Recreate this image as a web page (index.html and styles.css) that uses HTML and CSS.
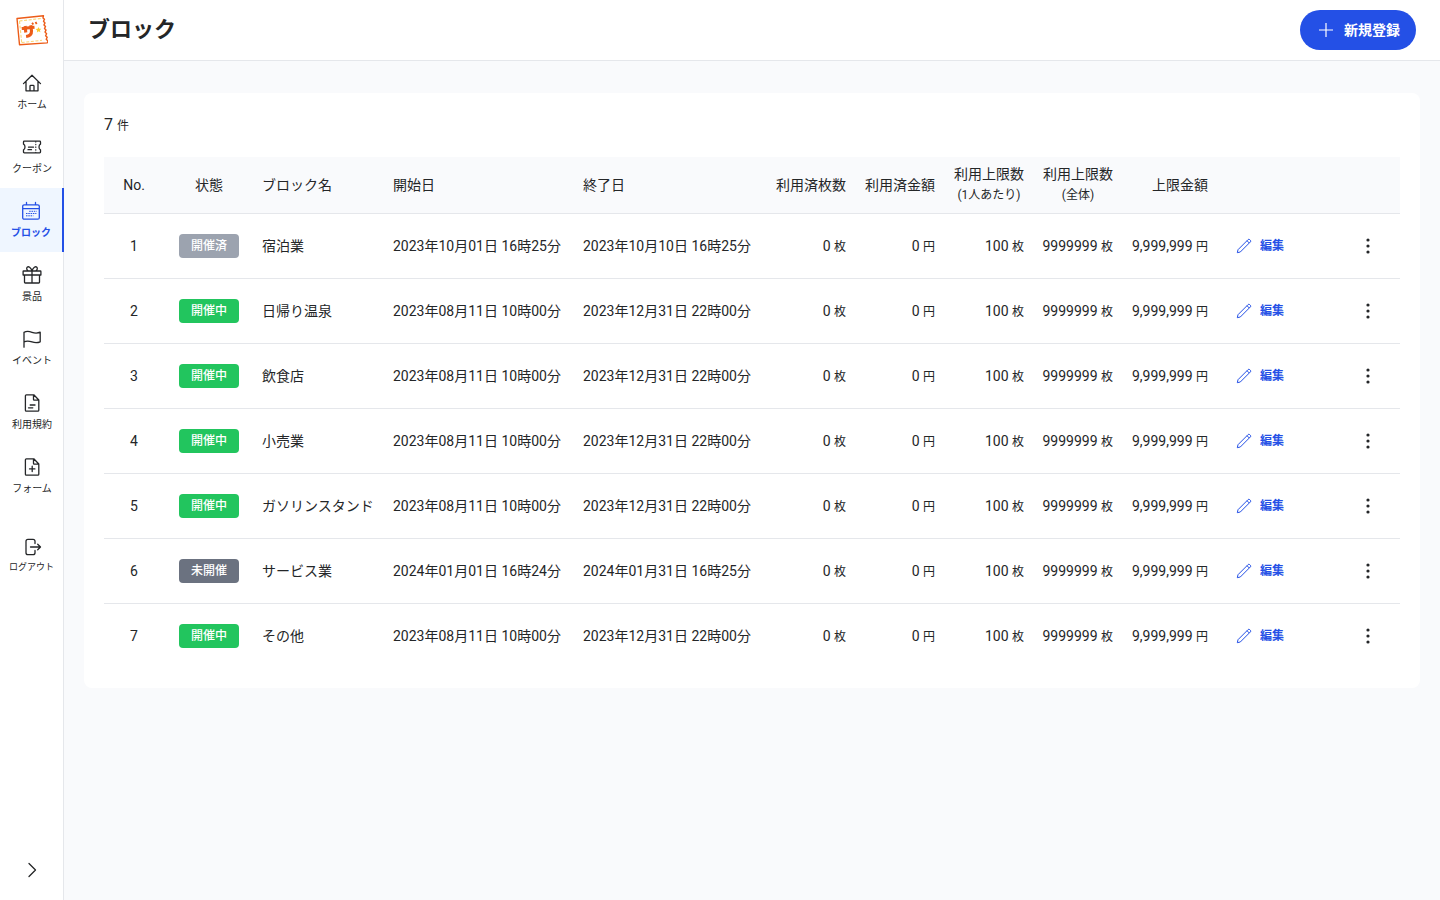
FILE: index.html
```html
<!DOCTYPE html>
<html lang="ja">
<head>
<meta charset="utf-8">
<meta name="viewport" content="width=device-width, initial-scale=1">
<title>ブロック</title>
<link rel="stylesheet" href="styles.css">
</head>
<body>
<svg class="sprite" aria-hidden="true">
  <symbol id="pencil" viewBox="0 0 16 16"><path d="M1.300 14.700l.7-3L12.100 1.600a1.100 1.100 0 0 1 1.600 0l.7.700a1.100 1.100 0 0 1 0 1.600L4.300 14zM11 2.700l2.300 2.300"/></symbol>
  <symbol id="dots" viewBox="0 0 20 20"><circle cx="10" cy="4" r="1.600"/><circle cx="10" cy="10" r="1.600"/><circle cx="10" cy="16" r="1.600"/></symbol>
</svg>
<div class="app">
  <aside class="sidebar">
    <a class="logo" href="#" aria-label="トップ">
      <svg width="32" height="32" viewBox="0.5 -0.5 32 32" fill="none">
        <path d="M1.500 4L28 1.200l-.5 2.300 1.500 1.300-1 2 1.500 1.600-1 2 1.500 1.600-1 2 1.500 1.600-1 2 1.600 1.600-1 2 1.600 1.600-1 2 1.700 1.600-.6 2L4 30.300z" stroke="#ec5c18" stroke-width="1.400" stroke-linejoin="round"/>
        <path d="M4 6.500L25.500 4M4 6.500L6.200 28M6.200 28L26.500 25.800" stroke="#fbd676" stroke-width="1.100" stroke-dasharray="3 1.600"/>
        <path d="M6.200 14l12.800-1.300M9.600 11.500l.7 6.500M15.300 10.800l.7 5.600c.2 3.200-1.400 5-5.400 5.600" stroke="#ec5c18" stroke-width="3.100"/>
        <path d="M16.600 8.200l1.200 1.800M20 7.600l1.200 1.800" stroke="#ec5c18" stroke-width="1.800"/>
        <path d="M23 12.500l.8 1.700 2 .1-1.400 1.400.5 2-1.800-.9-1.700 1.100.3-2-1.500-1.300 2-.4z" fill="#fbc92e"/>
      </svg>
    </a>
    <nav class="nav" aria-label="メイン">
      <a class="nav-item" href="#">
        <svg class="icon" viewBox="0 0 20 20"><path d="M1.500 10.600L10 2.200l8.500 8.400M4 8.300v9.500h12V8.300M8 17.800v-4.600c0-.5.3-.8.8-.8h2.400c.5 0 .8.3.8.8v4.600"/></svg>
        <span>ホーム</span>
      </a>
      <a class="nav-item" href="#">
        <svg class="icon" viewBox="0 0 20 20"><path d="M2.300 4.200h15.400c.5 0 .8.3.8.8v2.200c-2 .8-2 4.800 0 5.600V15c0 .5-.3.8-.8.8H2.300c-.5 0-.8-.3-.8-.8v-2.200c2-.8 2-4.800 0-5.600V5c0-.5.3-.8.8-.8zM6.500 10.200h5M6 12.700h3.500"/><path d="M13.800 4.500v11" stroke-width="1.100" stroke-dasharray=".6 2.100"/></svg>
        <span>クーポン</span>
      </a>
      <a class="nav-item active" href="#" aria-current="page">
        <svg class="icon" viewBox="0 0 20 20"><path d="M3.200 3.800h13.600c.9 0 1.500.6 1.500 1.500v11.400c0 .9-.6 1.500-1.500 1.500H3.200c-.9 0-1.500-.6-1.500-1.500V5.300c0-.9.6-1.500 1.500-1.500zM1.700 7.700h16.600M5.500 1.500v2.300M14.500 1.500v2.300"/><path class="dashes" d="M8.200 10.300h7.400M5 12.500h10.400M5 14.800h7.400"/></svg>
        <span>ブロック</span>
      </a>
      <a class="nav-item" href="#">
        <svg class="icon" viewBox="0 0 20 20"><path d="M1.600 6h16.800c.3 0 .5.200.5.500V10H1.100V6.500c0-.3.200-.5.500-.5zM2.500 10v7.200c0 .5.300.8.800.8h13.400c.5 0 .8-.3.800-.8V10M10 6v12M10 5.800C8.700 2.300 6.500 1 5.200 2.200 4 3.600 5 5 6.300 6M10 5.800c1.300-3.500 3.500-4.800 4.800-3.600C16 3.600 15 5 13.700 6"/></svg>
        <span>景品</span>
      </a>
      <a class="nav-item" href="#">
        <svg class="icon" viewBox="0 0 20 20"><path d="M2 18.200V3.300M2 3.300c2.500-1.300 5-1.100 8 0s5.500 1.100 8.200-.1v9.600c-2.700 1.200-5.200 1.200-8.200.1s-5.500-1.300-8 0"/></svg>
        <span>イベント</span>
      </a>
      <a class="nav-item" href="#">
        <svg class="icon" viewBox="0 0 20 20"><path d="M4.400 1.800h7.400L16.800 7v10.200c0 .6-.4 1-1 1H4.400c-.6 0-1-.4-1-1V2.800c0-.6.4-1 1-1zM11.500 1.800v4.700c0 .4.300.7.700.7h4.600M8.200 12h4.800M6.500 14.800h4.300"/></svg>
        <span>利用規約</span>
      </a>
      <a class="nav-item" href="#">
        <svg class="icon" viewBox="0 0 20 20"><path d="M4.400 1.800h7.400L16.800 7v10.200c0 .6-.4 1-1 1H4.400c-.6 0-1-.4-1-1V2.800c0-.6.4-1 1-1zM11.500 1.800v4.700c0 .4.300.7.700.7h4.600M10.200 9.200v5.400M7.500 11.900h5.400"/></svg>
        <span>フォーム</span>
      </a>
    </nav>
    <button class="nav-item logout" type="button">
      <svg class="icon" viewBox="0 0 20 20"><path d="M13 6.500V4.300c0-1.200-.8-2-2-2H6c-1.200 0-2 .8-2 2v11.400c0 1.200.8 2 2 2h5c1.200 0 2-.8 2-2v-2.200M8.500 10h10M15.700 7.200l2.800 2.800-2.800 2.800"/></svg>
      <span>ログアウト</span>
    </button>
    <button class="expand" type="button" aria-label="メニューを開く">
      <svg class="icon" viewBox="0 0 20 20"><path d="M7 3.500l6.500 6.500L7 16.500"/></svg>
    </button>
  </aside>
  <div class="content">
    <header class="topbar">
      <h1>ブロック</h1>
      <button class="create" type="button">
        <svg width="16" height="16" viewBox="0 0 16 16" fill="none" stroke="currentColor" stroke-width="1.200"><path d="M8 1v14M1 8h14"/></svg>
        <span>新規登録</span>
      </button>
    </header>
    <main class="main">
      <section class="card">
        <p class="count">7 <small>件</small></p>
        <table class="blocks">
          <colgroup>
            <col class="col-no"><col class="col-state"><col class="col-name"><col class="col-date"><col class="col-date"><col class="col-num"><col class="col-num"><col class="col-num"><col class="col-num"><col class="col-total"><col><col class="col-menu">
          </colgroup>
          <thead>
            <tr><th class="center">No.</th><th class="center">状態</th><th>ブロック名</th><th>開始日</th><th>終了日</th><th class="right">利用済枚数</th><th class="right">利用済金額</th><th class="right"><span class="stacked">利用上限数<small>(1人あたり)</small></span></th><th class="right"><span class="stacked">利用上限数<small>(全体)</small></span></th><th class="right">上限金額</th><th></th><th></th></tr>
          </thead>
          <tbody>
            <tr><td class="center">1</td><td class="center"><span class="badge ended">開催済</span></td><td>宿泊業</td><td>2023年10月01日 16時25分</td><td>2023年10月10日 16時25分</td><td class="right">0 <small>枚</small></td><td class="right">0 <small>円</small></td><td class="right">100 <small>枚</small></td><td class="right">9999999 <small>枚</small></td><td class="right">9,999,999 <small>円</small></td><td><a class="edit" href="#"><svg><use href="#pencil"/></svg>編集</a></td><td class="center"><button class="more" type="button" aria-label="その他の操作"><svg><use href="#dots"/></svg></button></td></tr>
            <tr><td class="center">2</td><td class="center"><span class="badge open">開催中</span></td><td>日帰り温泉</td><td>2023年08月11日 10時00分</td><td>2023年12月31日 22時00分</td><td class="right">0 <small>枚</small></td><td class="right">0 <small>円</small></td><td class="right">100 <small>枚</small></td><td class="right">9999999 <small>枚</small></td><td class="right">9,999,999 <small>円</small></td><td><a class="edit" href="#"><svg><use href="#pencil"/></svg>編集</a></td><td class="center"><button class="more" type="button" aria-label="その他の操作"><svg><use href="#dots"/></svg></button></td></tr>
            <tr><td class="center">3</td><td class="center"><span class="badge open">開催中</span></td><td>飲食店</td><td>2023年08月11日 10時00分</td><td>2023年12月31日 22時00分</td><td class="right">0 <small>枚</small></td><td class="right">0 <small>円</small></td><td class="right">100 <small>枚</small></td><td class="right">9999999 <small>枚</small></td><td class="right">9,999,999 <small>円</small></td><td><a class="edit" href="#"><svg><use href="#pencil"/></svg>編集</a></td><td class="center"><button class="more" type="button" aria-label="その他の操作"><svg><use href="#dots"/></svg></button></td></tr>
            <tr><td class="center">4</td><td class="center"><span class="badge open">開催中</span></td><td>小売業</td><td>2023年08月11日 10時00分</td><td>2023年12月31日 22時00分</td><td class="right">0 <small>枚</small></td><td class="right">0 <small>円</small></td><td class="right">100 <small>枚</small></td><td class="right">9999999 <small>枚</small></td><td class="right">9,999,999 <small>円</small></td><td><a class="edit" href="#"><svg><use href="#pencil"/></svg>編集</a></td><td class="center"><button class="more" type="button" aria-label="その他の操作"><svg><use href="#dots"/></svg></button></td></tr>
            <tr><td class="center">5</td><td class="center"><span class="badge open">開催中</span></td><td>ガソリンスタンド</td><td>2023年08月11日 10時00分</td><td>2023年12月31日 22時00分</td><td class="right">0 <small>枚</small></td><td class="right">0 <small>円</small></td><td class="right">100 <small>枚</small></td><td class="right">9999999 <small>枚</small></td><td class="right">9,999,999 <small>円</small></td><td><a class="edit" href="#"><svg><use href="#pencil"/></svg>編集</a></td><td class="center"><button class="more" type="button" aria-label="その他の操作"><svg><use href="#dots"/></svg></button></td></tr>
            <tr><td class="center">6</td><td class="center"><span class="badge upcoming">未開催</span></td><td>サービス業</td><td>2024年01月01日 16時24分</td><td>2024年01月31日 16時25分</td><td class="right">0 <small>枚</small></td><td class="right">0 <small>円</small></td><td class="right">100 <small>枚</small></td><td class="right">9999999 <small>枚</small></td><td class="right">9,999,999 <small>円</small></td><td><a class="edit" href="#"><svg><use href="#pencil"/></svg>編集</a></td><td class="center"><button class="more" type="button" aria-label="その他の操作"><svg><use href="#dots"/></svg></button></td></tr>
            <tr><td class="center">7</td><td class="center"><span class="badge open">開催中</span></td><td>その他</td><td>2023年08月11日 10時00分</td><td>2023年12月31日 22時00分</td><td class="right">0 <small>枚</small></td><td class="right">0 <small>円</small></td><td class="right">100 <small>枚</small></td><td class="right">9999999 <small>枚</small></td><td class="right">9,999,999 <small>円</small></td><td><a class="edit" href="#"><svg><use href="#pencil"/></svg>編集</a></td><td class="center"><button class="more" type="button" aria-label="その他の操作"><svg><use href="#dots"/></svg></button></td></tr>
          </tbody>
        </table>
      </section>
    </main>
  </div>
</div>
</body>
</html>
```
FILE: styles.css
```css
* { box-sizing: border-box; }
body {
  margin: 0;
  background: #f9fafc;
  color: #242628;
  font: 400 14px/20px Roboto, "Noto Sans CJK JP", sans-serif;
}
button { padding: 0; border: 0; background: none; color: inherit; font: inherit; cursor: pointer; }
a { color: inherit; text-decoration: none; }
.sprite { display: none; }

.app { display: flex; min-height: 100vh; }
.sidebar {
  display: flex;
  flex-direction: column;
  flex: none;
  width: 64px;
  background: #fff;
  border-right: 1px solid #e5e7eb;
}
.logo { display: flex; align-items: center; justify-content: center; height: 60px; }
.nav { margin-right: -1px; }
.nav-item {
  display: flex;
  flex-direction: column;
  align-items: center;
  gap: 5px;
  width: 100%;
  height: 64px;
  padding-top: 13px;
  font-size: 10px;
  line-height: 14px;
}
.nav-item.active {
  background: #eff6ff;
  border-right: 2px solid #2450e6;
  color: #2450e6;
  font-weight: 700;
}
.icon {
  width: 20px;
  height: 20px;
  fill: none;
  stroke: currentColor;
  stroke-width: 1.3;
  stroke-linecap: round;
  stroke-linejoin: round;
}
.dashes { stroke-width: 1; stroke-linecap: butt; stroke-dasharray: 1.5 0.8; }
.logout { margin-top: 16px; gap: 3px; font-size: 9px; }
.expand { display: flex; align-items: center; justify-content: center; height: 60px; margin-top: auto; }

.content { flex: 1; min-width: 0; }
.topbar {
  display: flex;
  align-items: center;
  justify-content: space-between;
  height: 61px;
  padding: 0 24px;
  background: #fff;
  border-bottom: 1px solid #e5e7eb;
}
h1 { margin: 0; font-size: 22px; line-height: 32px; font-weight: 700; }
.create {
  display: flex;
  align-items: center;
  gap: 10px;
  height: 40px;
  padding: 0 16px 0 18px;
  border-radius: 20px;
  background: #2450e6;
  color: #fff;
  font-weight: 700;
}
.main { padding: 32px 20px; }
.card { padding: 20px; border-radius: 8px; background: #fff; }
.count { margin: 0 0 20px; font-size: 16px; line-height: 24px; }
small { font-size: 12px; line-height: 1; }

.blocks { width: 100%; border-spacing: 0; table-layout: fixed; }
.col-no { width: 60px; }
.col-state { width: 90px; }
.col-name { width: 131px; }
.col-date { width: 190px; }
.col-num { width: 89px; }
.col-total { width: 95px; }
.col-menu { width: 64px; }
th, td {
  padding: 0 8px;
  border-bottom: 1px solid #e5e7eb;
  text-align: left;
  font-weight: 400;
  white-space: nowrap;
}
th { height: 57px; background: #f9fafc; }
td { height: 65px; }
tbody tr:last-child td { height: 64px; border-bottom: 0; }
.stacked { display: inline-block; vertical-align: top; text-align: center; }
.stacked small { display: block; line-height: 22px; }
.center { text-align: center; }
.right { text-align: right; }
.badge {
  display: block;
  width: 60px;
  margin: 0 auto;
  border-radius: 4px;
  color: #fff;
  font-size: 12px;
  font-weight: 500;
  line-height: 24px;
  text-align: center;
}
.ended { background: #9ca3af; }
.open { background: #22c55e; }
.upcoming { background: #6b7280; }
.edit {
  display: flex;
  align-items: center;
  gap: 8px;
  padding-left: 12px;
  color: #2450e6;
  font-size: 12px;
  font-weight: 700;
}
.edit svg { width: 16px; height: 16px; fill: none; stroke: currentColor; stroke-width: 1; stroke-linejoin: round; }
.more { display: block; width: 20px; height: 20px; margin: 0 auto; }
.more svg { display: block; width: 20px; height: 20px; fill: currentColor; }
```
